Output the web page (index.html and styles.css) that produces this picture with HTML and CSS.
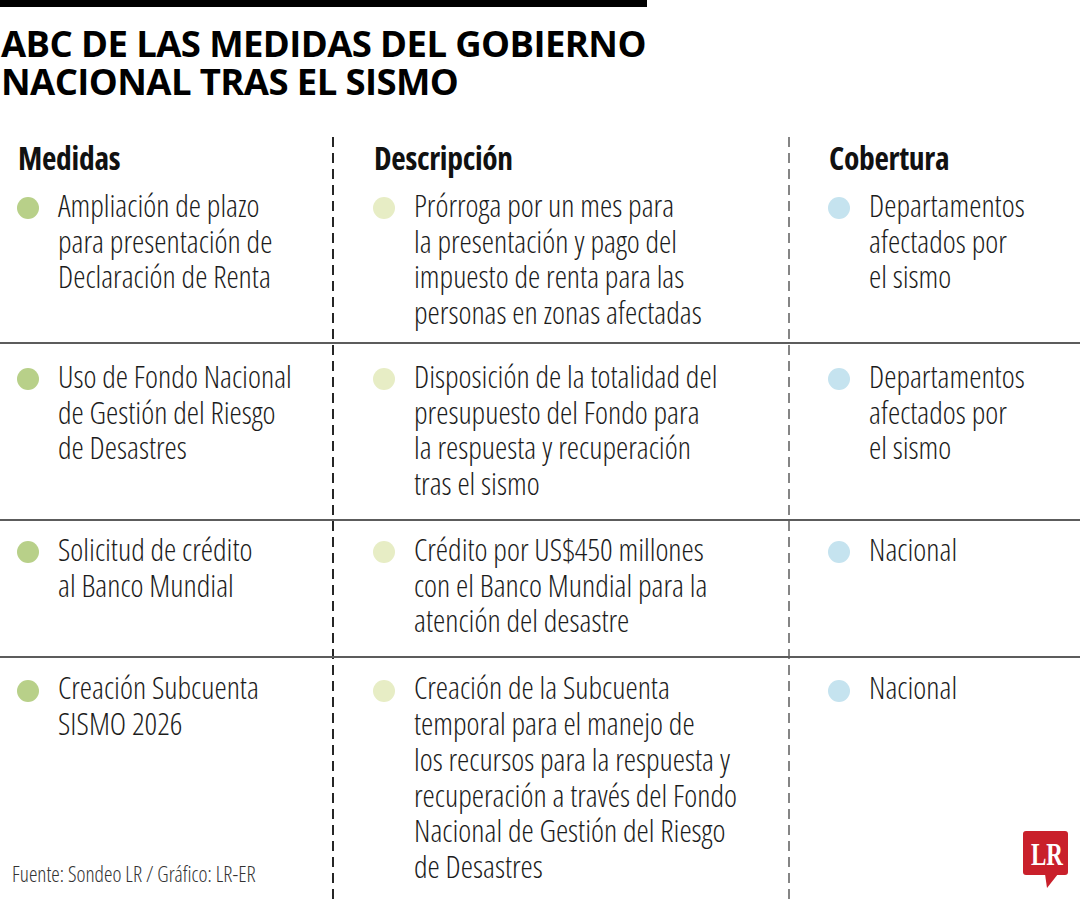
FILE: index.html
```html
<!DOCTYPE html>
<html lang="es">
<head>
<meta charset="utf-8">
<title>ABC de las medidas del Gobierno Nacional tras el sismo</title>
<link rel="stylesheet" href="styles.css">
</head>
<body>
<div class="page">
  <div class="topbar"></div>
  <h1 class="title">ABC DE LAS MEDIDAS DEL GOBIERNO<br>NACIONAL TRAS EL SISMO</h1>

  <div class="table">
    <div class="row row--head">
      <div class="cell cell--c1"><h2 class="head">Medidas</h2></div>
      <div class="cell cell--c2"><h2 class="head">Descripción</h2></div>
      <div class="cell cell--c3"><h2 class="head">Cobertura</h2></div>
    </div>

    <div class="row row--1">
      <div class="cell cell--c1"><span class="dot dot--green"></span><p class="txt">Ampliación de plazo<br>para presentación de<br>Declaración de Renta</p></div>
      <div class="cell cell--c2"><span class="dot dot--pale"></span><p class="txt">Prórroga por un mes para<br>la presentación y pago del<br>impuesto de renta para las<br>personas en zonas afectadas</p></div>
      <div class="cell cell--c3"><span class="dot dot--blue"></span><p class="txt">Departamentos<br>afectados por<br>el sismo</p></div>
    </div>

    <div class="row row--2">
      <div class="cell cell--c1"><span class="dot dot--green"></span><p class="txt">Uso de Fondo Nacional<br>de Gestión del Riesgo<br>de Desastres</p></div>
      <div class="cell cell--c2"><span class="dot dot--pale"></span><p class="txt">Disposición de la totalidad del<br>presupuesto del Fondo para<br>la respuesta y recuperación<br>tras el sismo</p></div>
      <div class="cell cell--c3"><span class="dot dot--blue"></span><p class="txt">Departamentos<br>afectados por<br>el sismo</p></div>
    </div>

    <div class="row row--3">
      <div class="cell cell--c1"><span class="dot dot--green"></span><p class="txt">Solicitud de crédito<br>al Banco Mundial</p></div>
      <div class="cell cell--c2"><span class="dot dot--pale"></span><p class="txt">Crédito por US$450 millones<br>con el Banco Mundial para la<br>atención del desastre</p></div>
      <div class="cell cell--c3"><span class="dot dot--blue"></span><p class="txt">Nacional</p></div>
    </div>

    <div class="row row--4">
      <div class="cell cell--c1 cell--stack">
        <div class="item"><span class="dot dot--green"></span><p class="txt">Creación Subcuenta<br>SISMO 2026</p></div>
        <p class="source">Fuente: Sondeo LR / Gráfico: LR-ER</p>
      </div>
      <div class="cell cell--c2"><span class="dot dot--pale"></span><p class="txt">Creación de la Subcuenta<br>temporal para el manejo de<br>los recursos para la respuesta y<br>recuperación a través del Fondo<br>Nacional de Gestión del Riesgo<br>de Desastres</p></div>
      <div class="cell cell--c3 cell--stack">
        <div class="item"><span class="dot dot--blue"></span><p class="txt">Nacional</p></div>
        <svg class="logo" width="50" height="57" viewBox="0 0 50 57" aria-label="LR">
          <rect x="0" y="0" width="45" height="44" rx="3" fill="#c9202b"/>
          <polygon points="22,43 35,43 24,57" fill="#c9202b"/>
          <text x="24" y="34" text-anchor="middle" font-family="Liberation Serif, serif" font-weight="700" font-size="31" fill="#ffffff" textLength="32" lengthAdjust="spacingAndGlyphs">LR</text>
        </svg>
      </div>
    </div>
  </div>
</div>
</body>
</html>
```
FILE: styles.css
```css
html, body {
  margin: 0;
  padding: 0;
  background: #ffffff;
}

.page {
  width: 1080px;
  height: 900px;
  overflow: hidden;
  display: flex;
  flex-direction: column;
  font-family: "Open Sans", "Liberation Sans", sans-serif;
  color: #1c1c1c;
}

.topbar {
  width: 647px;
  height: 7px;
  background: #000000;
  flex: none;
}

.title {
  margin: 16.7px 0 36.7px;
  padding-left: 1px;
  font-family: "Open Sans", sans-serif;
  font-weight: 700;
  font-stretch: 88%;
  font-size: 36.5px;
  letter-spacing: -0.6px;
  line-height: 38.3px;
  color: #000000;
  white-space: nowrap;
}

.table {
  flex: 1;
  display: flex;
  flex-direction: column;
  background-image:
    linear-gradient(#262626 10px, transparent 10px),
    linear-gradient(#858585 10px, transparent 10px);
  background-size: 2px 16px, 2px 16px;
  background-position: 332px 0, 788px 0;
  background-repeat: repeat-y;
}

.row {
  display: grid;
  grid-template-columns: 333px 456px 1fr;
  box-sizing: border-box;
  flex: none;
}

.row + .row:not(.row--1) {
  border-top: 2px solid #5c5c5c;
}

.row--head { height: 40px; padding-top: 1px; }
.row--1 { height: 165px; padding-top: 11px; }
.row--2 { height: 177px; padding-top: 15px; }
.row--3 { height: 137.5px; padding-top: 11px; }
.row--4 { flex: 1; padding-top: 12px; }

.cell {
  display: flex;
  align-items: flex-start;
  min-width: 0;
}

.cell--c1 { padding-left: 17px; }
.cell--c2 { padding-left: 40px; }
.cell--c3 { padding-left: 39px; }

.cell--stack {
  flex-direction: column;
}

.item {
  display: flex;
  align-items: flex-start;
}

.head {
  margin: 0 0 0 1px;
  font-weight: 700;
  font-stretch: 75%;
  font-size: 31.5px;
  letter-spacing: -0.3px;
  line-height: 40px;
  color: #111111;
  white-space: nowrap;
}

.dot {
  flex: none;
  width: 22px;
  height: 22px;
  border-radius: 50%;
  margin-top: 9.5px;
  margin-right: 19px;
}

.dot--green { background: #b8d089; }
.dot--pale { background: #e7edc5; }
.dot--blue { background: #c5e3ef; }

.txt {
  margin: 0;
  font-weight: 300;
  font-stretch: 75%;
  font-size: 31px;
  line-height: 35.7px;
  color: #1c1c1c;
  white-space: nowrap;
}

.source {
  margin: auto 0 14px -5px;
  font-weight: 300;
  font-stretch: 75%;
  font-size: 21.4px;
  line-height: 24px;
  color: #333333;
  white-space: nowrap;
}

.logo {
  display: block;
  margin: auto 7px 12px auto;
  align-self: flex-end;
}
```
